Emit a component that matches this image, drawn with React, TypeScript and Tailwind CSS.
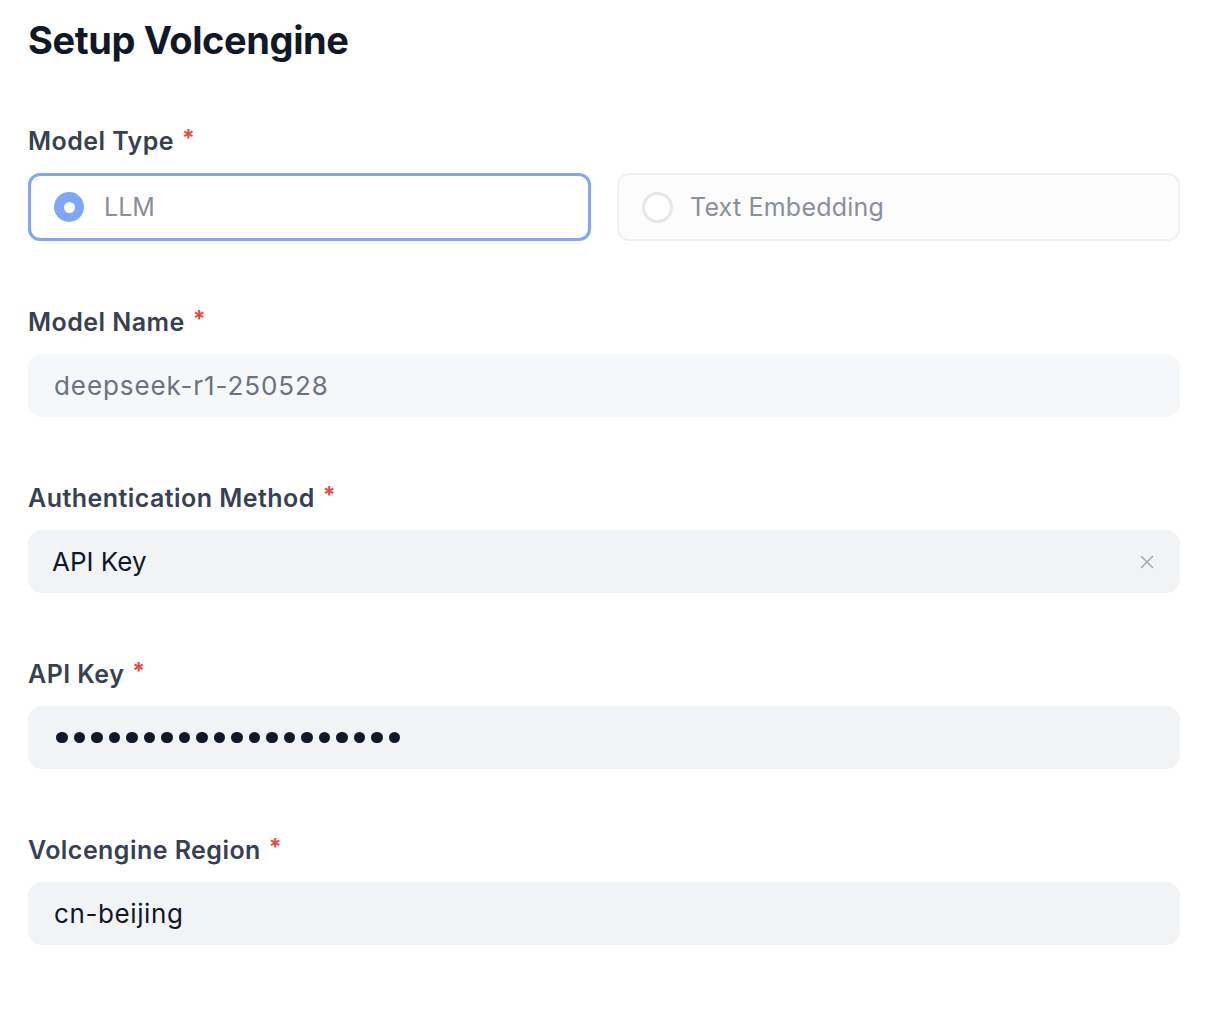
import { X } from "lucide-react";

const font = { fontFamily: "Inter, 'Noto Sans', sans-serif" };

function Label({ text }: { text: string }) {
  return (
    <div className="flex h-[28px] items-center text-[25px] font-semibold leading-[28px] tracking-[0.45px] text-[#374151]">
      <span>{text}</span>
      <span className="ml-[8px] -mt-[5px] text-[23px] font-bold leading-none text-[#ef4444]">*</span>
    </div>
  );
}

function RadioCard({ label, checked }: { label: string; checked: boolean }) {
  return (
    <div
      className={
        checked
          ? "flex h-[68px] items-center rounded-[12px] border-[3px] border-[#80a6f8] bg-white pl-[23px]"
          : "flex h-[68px] items-center rounded-[12px] border-2 border-[#f0f1f3] bg-[#fcfcfd] pl-[23px]"
      }
    >
      {checked ? (
        <span className="flex h-[30px] w-[30px] items-center justify-center rounded-full bg-[#80a6f8]">
          <span className="h-[11px] w-[11px] rounded-full bg-white" />
        </span>
      ) : (
        <span className="h-[31px] w-[31px] rounded-full border-[3px] border-[#e5e7eb] bg-white" />
      )}
      <span className={checked ? "ml-[20px] text-[25px] leading-none text-[#8a8f99]" : "ml-[17px] text-[25px] leading-none tracking-[0.2px] text-[#8a8f99]"}>
        {label}
      </span>
    </div>
  );
}

export default function App() {
  return (
    <div className="min-h-screen bg-white pl-[28px] pr-[46px] pt-[16px]" style={font}>
      <h1 className="text-[38px] font-bold leading-[48px] tracking-[-0.4px] text-[#111827]">Setup Volcengine</h1>

      {/* Model type */}
      <div className="mt-[63px]">
        <Label text="Model Type" />
        <div className="mt-[18px] grid grid-cols-2 gap-[26px]">
          <RadioCard label="LLM" checked />
          <RadioCard label="Text Embedding" checked={false} />
        </div>
      </div>

      {/* Model name */}
      <div className="mt-[67px]">
        <Label text="Model Name" />
        <div className="mt-[18px] flex h-[63px] items-center rounded-[14px] bg-[#f6f7f8] px-[26px] text-[26px] tracking-[0.9px] text-[#6b7280]">
          deepseek-r1-250528
        </div>
      </div>

      {/* Auth method */}
      <div className="mt-[67px]">
        <Label text="Authentication Method" />
        <div className="mt-[18px] flex h-[63px] items-center justify-between rounded-[14px] bg-[#f2f3f5] pl-[24px] pr-[22px] text-[26px] text-[#111827]">
          <span>API Key</span>
          <X className="h-[22px] w-[22px] text-[#a3a7ae]" strokeWidth={1.6} />
        </div>
      </div>

      {/* API key */}
      <div className="mt-[67px]">
        <Label text="API Key" />
        <div className="mt-[18px] flex h-[63px] items-center gap-[6px] rounded-[14px] bg-[#f2f3f5] px-[28px]">
          {Array.from({ length: 20 }).map((_, i) => (
            <span key={i} className="h-[11.5px] w-[11.5px] rounded-full bg-[#111827]" />
          ))}
        </div>
      </div>

      {/* Region */}
      <div className="mt-[67px]">
        <Label text="Volcengine Region" />
        <div className="mt-[18px] flex h-[63px] items-center rounded-[14px] bg-[#f2f3f5] px-[26px] text-[26px] tracking-[0.6px] text-[#111827]">
          cn-beijing
        </div>
      </div>
    </div>
  );
}
